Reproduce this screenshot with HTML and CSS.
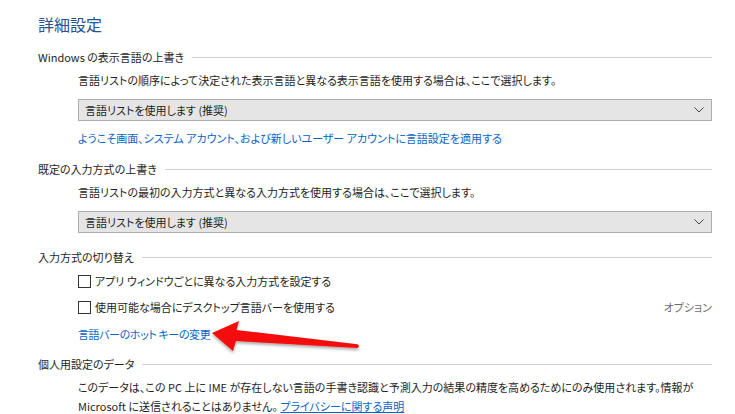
FILE: index.html
```html
<!DOCTYPE html>
<html lang="ja">
<head>
<meta charset="utf-8">
<title>詳細設定</title>
<link rel="stylesheet" href="styles.css">
</head>
<body>
<div class="page">
  <h1 class="title">詳細設定</h1>

  <div class="heading h-first"><span>Windows の表示言語の上書き</span></div>
  <div class="indent">
    <p class="desc">言語リストの順序によって決定された表示言語と異なる表示言語を使用する場合は、ここで選択します。</p>
    <div class="select">
      <span>言語リストを使用します (推奨)</span>
      <svg class="chev" width="12" height="8" viewBox="0 0 12 8"><path d="M1.5 1.5 L6 6 L10.5 1.5" fill="none" stroke="#444" stroke-width="1"/></svg>
    </div>
    <a class="link l-first" href="#">ようこそ画面、システム アカウント、および新しいユーザー アカウントに言語設定を適用する</a>
  </div>

  <div class="heading h-second"><span>既定の入力方式の上書き</span></div>
  <div class="indent">
    <p class="desc">言語リストの最初の入力方式と異なる入力方式を使用する場合は、ここで選択します。</p>
    <div class="select">
      <span>言語リストを使用します (推奨)</span>
      <svg class="chev" width="12" height="8" viewBox="0 0 12 8"><path d="M1.5 1.5 L6 6 L10.5 1.5" fill="none" stroke="#444" stroke-width="1"/></svg>
    </div>
  </div>

  <div class="heading h-third"><span>入力方式の切り替え</span></div>
  <div class="indent">
    <label class="check c-first"><span class="box"></span><span>アプリ ウィンドウごとに異なる入力方式を設定する</span></label>
    <div class="check-row">
      <label class="check"><span class="box"></span><span>使用可能な場合にデスクトップ言語バーを使用する</span></label>
      <span class="option">オプション</span>
    </div>
    <a class="link l-second" href="#">言語バーのホット キーの変更</a>
  </div>

  <div class="heading h-fourth"><span>個人用設定のデータ</span></div>
  <div class="indent">
    <p class="para">このデータは、この PC 上に IME が存在しない言語の手書き認識と予測入力の結果の精度を高めるためにのみ使用されます。情報が<br>Microsoft に送信されることはありません。 <a class="ulink" href="#">プライバシーに関する声明</a></p>
  </div>
</div>

<svg class="arrow" width="735" height="414" viewBox="0 0 735 414">
  <defs>
    <filter id="sh" x="-20%" y="-50%" width="140%" height="200%">
      <feDropShadow dx="0" dy="2" stdDeviation="1.5" flood-color="#000" flood-opacity="0.35"/>
    </filter>
  </defs>
  <path d="M212 333 L239 321 L236.5 330 L357.5 344.2 Q360.5 346 357.5 348 L236 341 L233 351 Z" fill="#f50a0a" filter="url(#sh)"/>
</svg>
</body>
</html>
```

FILE: styles.css
```css
html, body {
  margin: 0;
  padding: 0;
  background: #ffffff;
}

body {
  font-family: "Noto Sans CJK JP", "Noto Sans", sans-serif;
  font-size: 11px;
  color: #1e1e1e;
  font-feature-settings: "palt";
  width: 735px;
  height: 414px;
  overflow: hidden;
  position: relative;
}

.page {
  padding: 0 23px 0 38px;
  display: flex;
  flex-direction: column;
}

.title {
  margin: 13px 0 0 0;
  font-size: 16px;
  font-weight: normal;
  line-height: 22px;
  color: #2a528f;
}

.heading {
  display: flex;
  align-items: center;
  gap: 8px;
  line-height: 18px;
  height: 18px;
  white-space: nowrap;
}

.heading::after {
  content: "";
  flex: 1;
  height: 1px;
  background: #d0d0d0;
}

.h-first { margin-top: 13px; }
.h-second { margin-top: 13px; }
.h-third { margin-top: 15px; }
.h-fourth { margin-top: 12px; }

.indent {
  padding-left: 40px;
  display: flex;
  flex-direction: column;
}

.desc {
  margin: 5px 0 0 0;
  line-height: 18px;
  white-space: nowrap;
}

.select {
  margin-top: 10px;
  height: 20px;
  border: 1px solid #adadad;
  background: #e5e5e5;
  display: flex;
  align-items: center;
  justify-content: space-between;
  padding: 0 6px 0 6px;
}

.select span {
  line-height: 18px;
}

.chev {
  display: block;
}

.link {
  color: #0b63c4;
  text-decoration: none;
  line-height: 18px;
  align-self: flex-start;
  white-space: nowrap;
}

.l-first { margin-top: 8px; }
.l-second { margin-top: 9px; letter-spacing: -0.4px; }

.check {
  display: flex;
  align-items: center;
  gap: 4px;
  line-height: 18px;
  white-space: nowrap;
}

.c-first { margin-top: 6px; }

.box {
  width: 11px;
  height: 11px;
  border: 1px solid #333333;
  background: #ffffff;
  flex: none;
}

.check-row {
  margin-top: 8px;
  display: flex;
  justify-content: space-between;
  align-items: center;
}

.option {
  color: #6e6e6e;
  line-height: 18px;
}

.para {
  margin: 5px 0 0 0;
  line-height: 19px;
  white-space: nowrap;
}

.ulink {
  color: #0b63c4;
  text-decoration: underline;
}

.arrow {
  position: absolute;
  left: 0;
  top: 0;
  pointer-events: none;
}
```
